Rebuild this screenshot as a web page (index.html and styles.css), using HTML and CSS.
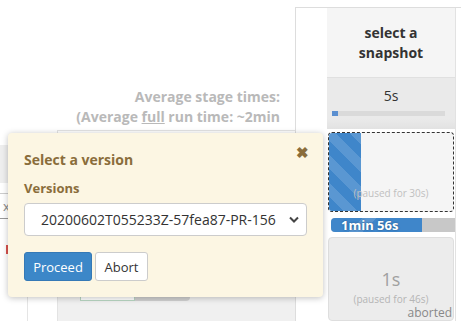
FILE: index.html
```html
<!DOCTYPE html>
<html lang="en">
<head>
  <meta charset="UTF-8" />
  <title>Stage view - select a version</title>
  <link rel="stylesheet" href="styles.css">
</head>
<body>
  <div class="page">
    <div class="left-pane">
      <div class="avg-times">
        <div>Average stage times:</div>
        <div>(Average <u>full</u> run time: ~2min</div>
      </div>
      <div class="history">
        <div class="side">
          <div class="side-band"></div>
          <div class="side-input">x</div>
          <div class="side-flag"></div>
          <div class="side-rest"></div>
        </div>
        <div class="history-box">
          <div class="history-top"></div>
          <div class="history-bottom">
            <div class="mini-box ok"></div>
            <div class="mini-box grey"></div>
          </div>
        </div>
      </div>
    </div>

    <div class="stage-table">
      <div class="gutter"></div>
      <div class="stage-col">
        <div class="stage-head">select a<br>snapshot</div>
        <div class="stage-avg">
          <div>5s</div>
          <div class="progress"><span class="progress-fill"></span></div>
        </div>
        <div class="stage-cell paused">
          <div class="paused-bar"></div>
          <div class="paused-text">(paused for 30s)</div>
        </div>
        <div class="run-bar">
          <div class="run-fill">1min 56s</div>
        </div>
        <div class="stage-cell aborted">
          <div class="cell-time">1s</div>
          <div class="cell-note">(paused for 46s)</div>
          <div class="cell-status">aborted</div>
        </div>
      </div>
      <div class="next-col"></div>
    </div>
  </div>

  <div class="version-popup">
    <span class="close">&#x2716;</span>
    <div class="popup-title">Select a version</div>
    <label class="popup-label">Versions</label>
    <div class="select">
      <span>20200602T055233Z-57fea87-PR-156</span>
      <svg width="10" height="7" viewBox="0 0 10 7"><path d="M1 1.5 L5 5.5 L9 1.5" fill="none" stroke="#444" stroke-width="2"/></svg>
    </div>
    <div class="popup-buttons">
      <button class="btn btn-primary">Proceed</button>
      <button class="btn btn-default">Abort</button>
    </div>
  </div>
</body>
</html>
```

FILE: styles.css
```css
body {
  margin: 0;
  width: 461px;
  height: 321px;
  overflow: hidden;
  position: relative;
  background: #fff;
  font-family: 'Open Sans', 'Noto Sans', sans-serif;
  color: #333;
}

.page {
  display: flex;
  height: 321px;
}

/* left side, mostly hidden under the popup */
.left-pane {
  width: 295px;
  display: flex;
  flex-direction: column;
}

.avg-times {
  padding: 87px 15px 0 0;
  text-align: right;
  font-size: 14px;
  font-weight: bold;
  line-height: 20px;
  color: #b9b9b9;
  box-sizing: border-box;
  height: 130px;
}

.history {
  flex: 1;
  display: flex;
}

.side {
  width: 57px;
  display: flex;
  flex-direction: column;
}

.side-band {
  margin-top: 15px;
  height: 38px;
  width: 27px;
  background: #eee;
}

.side-input {
  margin-top: 10px;
  height: 24px;
  border-top: 1px solid #ccc;
  border-bottom: 1px solid #999;
  font-size: 13px;
  line-height: 24px;
  color: #888;
  padding-left: 3px;
}

.side-flag {
  margin: 26px 0 0 6px;
  width: 3px;
  height: 9px;
  background: #d9534f;
}

.side-rest {
  margin-top: 36px;
  flex: 1;
  margin-left: 27px;
  border-left: 1px solid #e5e5e5;
}

.history-box {
  flex: 1;
  border-top: 1px solid #e3e3e3;
  border-left: 1px solid #e3e3e3;
  display: flex;
  flex-direction: column;
}

.history-top {
  flex: 1;
}

.history-bottom {
  height: 26px;
  background: #f0f0f0;
  display: flex;
  align-items: flex-start;
  padding-left: 22px;
}

.mini-box {
  width: 55px;
  height: 6px;
}

.mini-box.ok {
  background: #fff;
  border: 1px solid #b9d6c2;
  border-top: none;
  box-sizing: border-box;
}

.mini-box.grey {
  background: #d0d0d0;
  border-radius: 0 0 4px 0;
}

/* stage view table */
.stage-table {
  flex: 1;
  margin-top: 7px;
  border-top: 1px solid #ddd;
  border-left: 1px solid #ddd;
  display: flex;
}

.gutter {
  width: 31px;
}

.stage-col {
  width: 128px;
  border-right: 1px solid #e2e2e2;
  display: flex;
  flex-direction: column;
}

.next-col {
  flex: 1;
  background: #fff;
}

.stage-head {
  height: 70px;
  background: #f5f5f5;
  font-size: 14px;
  font-weight: bold;
  line-height: 20px;
  text-align: center;
  padding-top: 15px;
  box-sizing: border-box;
  border-bottom: 1px solid #e0e0e0;
}

.stage-avg {
  height: 52px;
  background: linear-gradient(#eaeaea 80%, #e2e2e2);
  text-align: center;
  font-size: 14px;
  line-height: 20px;
  padding-top: 8px;
  box-sizing: border-box;
}

.progress {
  margin: 5px 10px 0 5px;
  height: 5px;
  background: #dadada;
  display: flex;
}

.progress-fill {
  width: 6px;
  background: #5b8fd0;
}

.stage-cell {
  margin: 3px 1px 0 1px;
  border-radius: 4px;
  box-sizing: border-box;
  position: relative;
}

.stage-cell.paused {
  height: 80px;
  background: #f5f5f5;
  border: 1px dashed #333;
  display: flex;
}

.paused-bar {
  width: 32px;
  border-radius: 3px 0 0 3px;
  background: repeating-linear-gradient(45deg, #3f86ca 0 10px, #5a97d2 10px 20px);
}

.paused-text {
  position: absolute;
  left: 0;
  right: 0;
  top: 53px;
  text-align: center;
  font-size: 10px;
  color: #c0c0c0;
}

.run-bar {
  margin: 6px 0 0 4px;
  height: 14px;
  background: #c8c8c8;
  border-radius: 4px 0 0 4px;
  display: flex;
}

.run-fill {
  width: 91px;
  border-radius: 4px 0 0 4px;
  background: repeating-linear-gradient(-45deg, #3f86ca 0 42px, #5b96d0 42px 52px, #3f86ca 52px 60px);
  color: #fff;
  font-size: 13px;
  font-weight: bold;
  line-height: 14px;
  padding-left: 10px;
  box-sizing: border-box;
  text-shadow: 0 0 2px #1d4f80;
}

.stage-cell.aborted {
  margin-top: 5px;
  flex: 1;
  background: #ececec;
  border: 1px solid #dedede;
  text-align: center;
  padding-top: 31px;
}

.cell-time {
  font-size: 18px;
  line-height: 21px;
  color: #a0a0a0;
}

.cell-note {
  font-size: 10px;
  color: #b5b5b5;
  margin-top: 2px;
}

.cell-status {
  text-align: right;
  font-size: 12px;
  color: #888;
  line-height: 14px;
  padding-right: 1px;
}

/* popup */
.version-popup {
  position: absolute;
  left: 8px;
  top: 133px;
  width: 315px;
  height: 164px;
  box-sizing: border-box;
  background: #fcf6e3;
  border-radius: 4px;
  box-shadow: 0 1px 6px rgba(0, 0, 0, 0.25);
  padding: 17px 16px 0 16px;
  color: #8a6d3b;
}

.close {
  position: absolute;
  right: 14px;
  top: 9px;
  font-size: 15px;
  font-weight: bold;
  color: #8a6d3b;
}

.popup-title {
  font-size: 14px;
  font-weight: bold;
  line-height: 20px;
}

.popup-label {
  display: block;
  margin-top: 9px;
  font-size: 13px;
  font-weight: bold;
  line-height: 18px;
}

.select {
  margin-top: 6px;
  width: 283px;
  height: 33px;
  box-sizing: border-box;
  background: #fff;
  border: 1px solid #ccc;
  border-radius: 4px;
  display: flex;
  align-items: center;
  justify-content: space-between;
  padding: 0 7px 0 16px;
  font-size: 14px;
  color: #333;
}

.popup-buttons {
  margin-top: 16px;
  display: flex;
  gap: 3px;
}

.btn {
  height: 29px;
  font-family: inherit;
  font-size: 13px;
  border-radius: 3px;
  padding: 0 6px;
  cursor: pointer;
}

.btn-primary {
  width: 68px;
  background: #3c87c8;
  border: 1px solid #3579b6;
  color: #fff;
}

.btn-default {
  width: 53px;
  background: #fff;
  border: 1px solid #ccc;
  color: #333;
}
```
